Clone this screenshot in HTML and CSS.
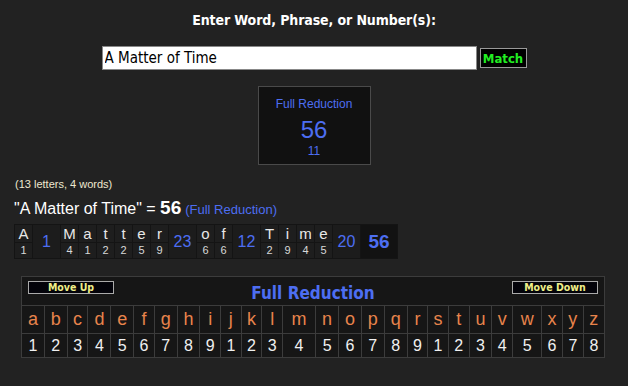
FILE: index.html
```html
<!DOCTYPE html>
<html>
<head>
<meta charset="utf-8">
<link rel="stylesheet" href="styles.css">
</head>
<body>
<h1 class="title">Enter Word, Phrase, or Number(s):</h1>
<div class="form">
  <input class="entry" type="text" value="A Matter of Time">
  <button class="match">Match</button>
</div>
<div class="result">
  <div class="result-name">Full Reduction</div>
  <div class="result-value">56</div>
  <div class="result-sub">11</div>
</div>
<div class="stats">(13 letters, 4 words)</div>
<div class="equation">"A Matter of Time" = <b class="eq-total">56</b><span class="eq-cipher">(Full Reduction)</span></div>
<table class="breakdown">
  <tr>
    <td class="lt">A</td><td class="ws" rowspan="2">1</td>
    <td class="lt">M</td><td class="lt">a</td><td class="lt">t</td><td class="lt">t</td><td class="lt">e</td><td class="lt">r</td><td class="ws" rowspan="2">23</td>
    <td class="lt">o</td><td class="lt">f</td><td class="ws" rowspan="2">12</td>
    <td class="lt">T</td><td class="lt">i</td><td class="lt">m</td><td class="lt">e</td><td class="ws" rowspan="2">20</td>
    <td class="total" rowspan="2">56</td>
  </tr>
  <tr>
    <td class="nm">1</td>
    <td class="nm">4</td><td class="nm">1</td><td class="nm">2</td><td class="nm">2</td><td class="nm">5</td><td class="nm">9</td>
    <td class="nm">6</td><td class="nm">6</td>
    <td class="nm">2</td><td class="nm">9</td><td class="nm">4</td><td class="nm">5</td>
  </tr>
</table>
<table class="chart">
  <tr>
    <td class="chart-head" colspan="26">
      <div class="head-inner">
        <button class="move">Move Up</button>
        <span class="chart-title">Full Reduction</span>
        <button class="move">Move Down</button>
      </div>
    </td>
  </tr>
  <tr class="letters">
    <td>a</td><td>b</td><td>c</td><td>d</td><td>e</td><td>f</td><td>g</td><td>h</td><td>i</td><td>j</td><td>k</td><td>l</td><td>m</td><td>n</td><td>o</td><td>p</td><td>q</td><td>r</td><td>s</td><td>t</td><td>u</td><td>v</td><td>w</td><td>x</td><td>y</td><td>z</td>
  </tr>
  <tr class="numbers">
    <td>1</td><td>2</td><td>3</td><td>4</td><td>5</td><td>6</td><td>7</td><td>8</td><td>9</td><td>1</td><td>2</td><td>3</td><td>4</td><td>5</td><td>6</td><td>7</td><td>8</td><td>9</td><td>1</td><td>2</td><td>3</td><td>4</td><td>5</td><td>6</td><td>7</td><td>8</td>
  </tr>
</table>
</body>
</html>
```
FILE: styles.css
```css
html, body {
  margin: 0;
  padding: 0;
  background: #222222;
  font-family: "Liberation Sans", Arial, sans-serif;
  color: #ffffff;
}
.title {
  margin: 12px 0 0;
  font-size: 14px;
  line-height: 16px;
  font-weight: bold;
  text-align: center;
  font-family: "DejaVu Sans Condensed", "DejaVu Sans", sans-serif;
  letter-spacing: -0.1px;
}
.form {
  margin-top: 18px;
  display: flex;
  justify-content: center;
  align-items: center;
  gap: 3px;
}
.entry {
  box-sizing: border-box;
  width: 375px;
  height: 24px;
  margin: 0;
  padding: 0 2px;
  border: 1px solid #888;
  background: #fff;
  color: #000;
  font-family: "DejaVu Sans Condensed", "DejaVu Sans", sans-serif;
  font-size: 15px;
  outline: none;
}
.match {
  box-sizing: border-box;
  height: 20px;
  width: 47px;
  margin: 0;
  padding: 0;
  background: #000;
  border: 1px solid #999;
  color: #22ee22;
  font-family: "DejaVu Sans Condensed", "DejaVu Sans", sans-serif;
  font-weight: bold;
  font-size: 13px;
}
.result {
  box-sizing: border-box;
  width: 113px;
  height: 79px;
  margin: 16px auto 0;
  padding-top: 10px;
  background: #111111;
  border: 1px solid #4a4a4a;
  text-align: center;
  color: #4d6ef2;
}
.result-name {
  font-size: 12px;
  line-height: 14px;
}
.result-value {
  margin-top: 6px;
  font-size: 24px;
  line-height: 26px;
}
.result-sub {
  margin-top: 1px;
  font-size: 12px;
  line-height: 14px;
}
.stats {
  margin: 13px 0 0 15px;
  font-size: 11px;
  line-height: 13px;
  color: #eee8d0;
}
.equation {
  margin: 7px 0 0 14px;
  font-size: 16px;
  line-height: 20px;
  color: #fff;
}
.eq-total {
  font-size: 19px;
  font-weight: bold;
  margin-right: 4px;
}
.eq-cipher {
  font-size: 13px;
  color: #4d6ef2;
}
.breakdown {
  margin: 4px 0 0 14px;
  border-collapse: separate;
  border-spacing: 1px;
  background: #141414;
}
.breakdown td {
  padding: 0;
  text-align: center;
}
.breakdown .lt {
  width: 17px;
  height: 17px;
  font-size: 15px;
  line-height: 17px;
  background: #1e1e1e;
  color: #e8e8e8;
}
.breakdown .nm {
  height: 15px;
  font-size: 11px;
  line-height: 15px;
  background: #1e1e1e;
  color: #d8d8d8;
}
.breakdown .ws {
  width: 27px;
  font-size: 16px;
  background: #1c1c1c;
  color: #4d6ef2;
}
.breakdown .total {
  width: 36px;
  font-size: 19px;
  font-weight: bold;
  background: #121212;
  color: #4d6ef2;
}
.chart {
  width: 584px;
  margin: 17px 0 0 21px;
  border-collapse: collapse;
  border: 1px solid #444;
  background: #161616;
}
.chart td {
  border: 1px solid #3c3c3c;
  padding: 0;
  text-align: center;
}
.chart .chart-head {
  height: 24px;
  padding: 4px 6px 0;
  vertical-align: top;
}
.head-inner {
  display: flex;
  justify-content: space-between;
  align-items: flex-start;
}
.move {
  box-sizing: border-box;
  width: 86px;
  height: 13px;
  margin: 0;
  padding: 0;
  background: #03030a;
  border: 1px solid #aaa;
  color: #eeee88;
  font-family: "DejaVu Sans Condensed", "DejaVu Sans", sans-serif;
  font-weight: bold;
  font-size: 10.5px;
  line-height: 11px;
}
.chart-title {
  margin-top: 2px;
  font-size: 17px;
  line-height: 20px;
  font-weight: bold;
  color: #4d6ef2;
  font-family: "DejaVu Sans Condensed", "DejaVu Sans", sans-serif;
}
.letters td {
  height: 27px;
  font-size: 18px;
  color: #e8844c;
}
.numbers td {
  height: 23px;
  font-size: 16px;
  color: #f0f0f0;
}
```
